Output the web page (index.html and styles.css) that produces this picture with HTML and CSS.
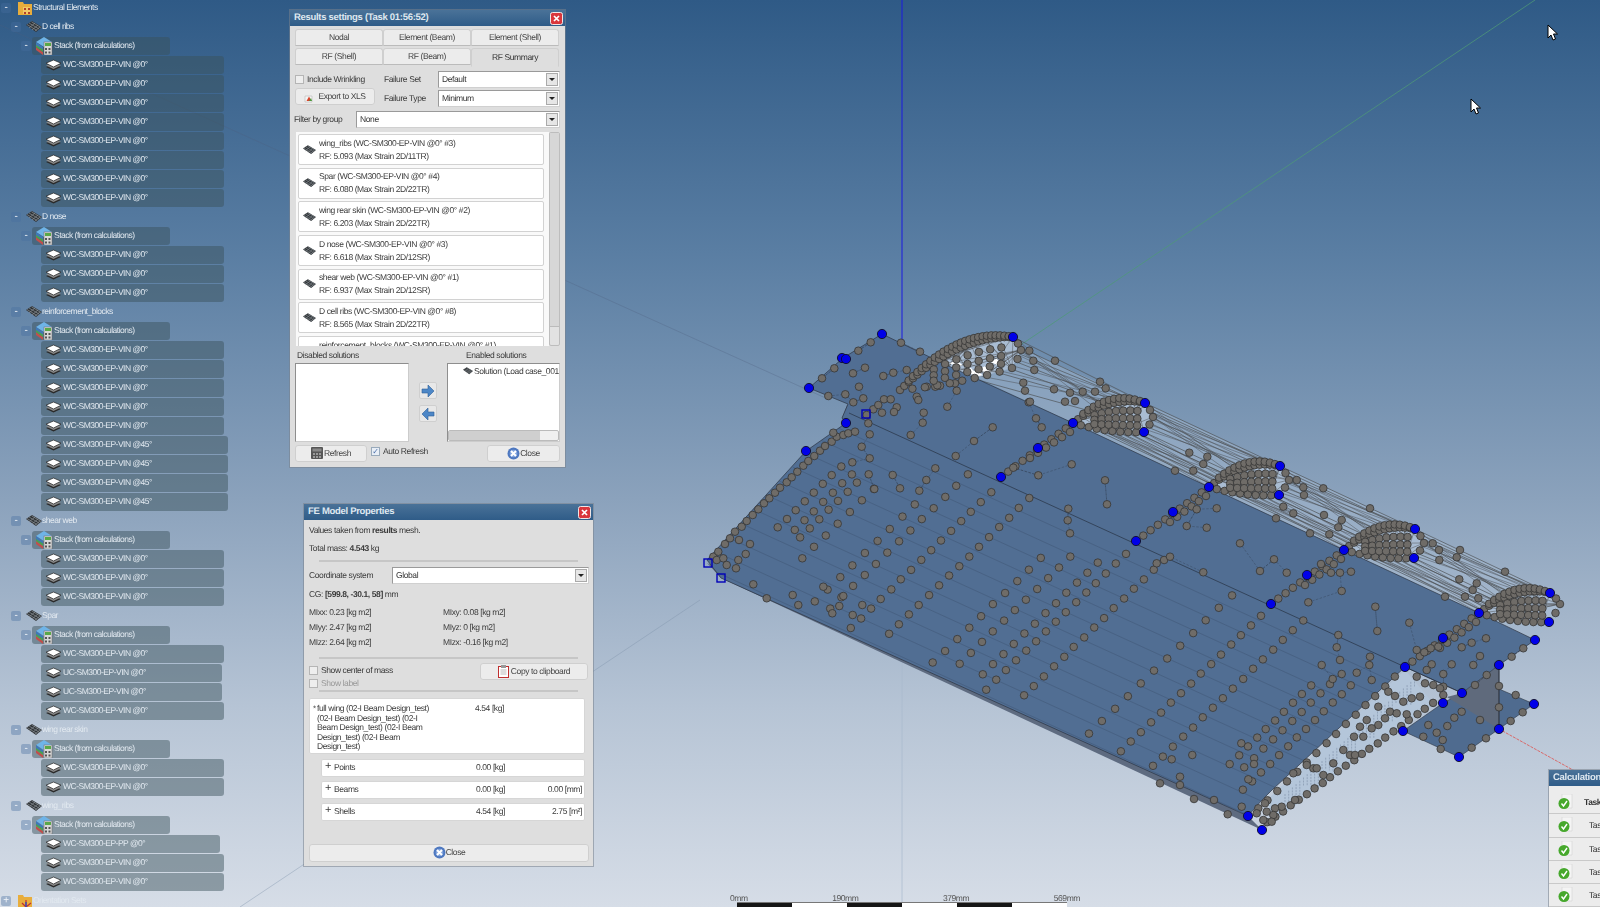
FILE: index.html
```html
<!DOCTYPE html>
<html lang="en">
<head>
<meta charset="utf-8">
<title>FE Results</title>
<link rel="stylesheet" href="styles.css">
<script src="mesh.js" defer></script>
</head>
<body>
<svg class="defs" width="0" height="0" aria-hidden="true">
  <symbol id="ply" viewBox="0 0 17 12">
    <path d="M8.5 5 16 8 8.5 11.5 1 8z" fill="#2a2a2a"/>
    <path d="M8.5 3.500 16 6.500 8.500 10 1 6.500z" fill="#888"/>
    <path d="M8.500 1 16 4.200 8.500 8 1 4.200z" fill="#fff" stroke="#222" stroke-width=".7"/>
  </symbol>
  <symbol id="stk" viewBox="0 0 18 18">
    <path d="M1 10 8 15 8 18 1 13z" fill="#c0504d"/>
    <path d="M1 7 8 12 8 15 1 10z" fill="#4aa050"/>
    <path d="M1 5 9 0 17 5 9 10z" fill="#6fb4e8"/>
    <path d="M1 5 8 10 8 12.500 1 8z" fill="#3e78b8"/>
    <rect x="9" y="5" width="8" height="13" fill="#d8d8d8" stroke="#666" stroke-width=".5"/>
    <rect x="10" y="6" width="6" height="3" fill="#5aa848"/>
    <path d="M10 11h2v2h-2zM13.500 11h2v2h-2zM10 14.500h2v2h-2zM13.500 14.500h2v2h-2z" fill="#555"/>
  </symbol>
  <symbol id="msh" viewBox="0 0 16 12">
    <path d="M0 4 6 0 16 6 10 11z" fill="#2f3336"/>
    <path d="M3 2 13 8M5.500 .8 15 6.500M1 3.500 11 9.500M3 7 9 2M6 9 12 4M9 10 14 6" stroke="#8b9196" stroke-width=".7" fill="none"/>
  </symbol>
  <symbol id="fld" viewBox="0 0 14 14">
    <path d="M0 1h5l1 2h8v11H0z" fill="#e8ad3c"/>
    <path d="M5 6h7v7H5z" fill="#f2c867"/>
    <path d="M6 7h2v2H6zM10 7h2v2h-2zM6 11h2v2H6zM10 11h2v2h-2z" fill="#b3402a"/>
  </symbol>
  <symbol id="fld2" viewBox="0 0 14 14">
    <path d="M0 1h5l1 2h8v11H0z" fill="#e8ad3c"/>
    <path d="M8 13V6M8 13 13 9M8 13 4 9" stroke="#c03030" stroke-width="1.200"/>
    <path d="M8 13V8" stroke="#2f50c0" stroke-width="1.400"/>
  </symbol>
  <symbol id="xbtn" viewBox="0 0 13 13">
    <rect x=".5" y=".5" width="12" height="12" rx="2" fill="#d9363c" stroke="#efe6e6"/>
    <path d="M4 4l5 5M9 4 4 9" stroke="#fff" stroke-width="1.700"/>
  </symbol>
  <symbol id="cls" viewBox="0 0 13 13">
    <circle cx="6.500" cy="6.500" r="6" fill="#4e78c0"/>
    <circle cx="6.500" cy="6.500" r="3.800" fill="#7fa2dc"/>
    <path d="M4 4l5 5M9 4 4 9" stroke="#fff" stroke-width="2"/>
  </symbol>
  <symbol id="chk" viewBox="0 0 16 16">
    <path d="M4 0h10v14H4z" fill="#f4f4f4" stroke="#ccc" stroke-width=".5"/>
    <circle cx="6" cy="9.500" r="5.500" fill="#46a82c"/>
    <path d="M3.500 9.500 5.500 12 9 7" stroke="#fff" stroke-width="1.400" fill="none"/>
  </symbol>
</svg>

<svg id="mesh" class="mesh" width="1600" height="907" viewBox="0 0 1600 907"></svg>

<nav class="tree">
  <div class="row root"><i class="exp">-</i><svg class="ic-f"><use href="#fld"/></svg><span>Structural Elements</span></div>

  <div class="row grp"><i class="exp">-</i><svg class="ic-m"><use href="#msh"/></svg><span>D cell ribs</span></div>
  <div class="row stk"><i class="exp">-</i><span class="pill"><svg class="ic-s"><use href="#stk"/></svg>Stack (from calculations)</span></div>
  <div class="row ply"><span class="pill vin"><svg class="ic-p"><use href="#ply"/></svg>WC-SM300-EP-VIN @0°</span></div>
  <div class="row ply"><span class="pill vin"><svg class="ic-p"><use href="#ply"/></svg>WC-SM300-EP-VIN @0°</span></div>
  <div class="row ply"><span class="pill vin"><svg class="ic-p"><use href="#ply"/></svg>WC-SM300-EP-VIN @0°</span></div>
  <div class="row ply"><span class="pill vin"><svg class="ic-p"><use href="#ply"/></svg>WC-SM300-EP-VIN @0°</span></div>
  <div class="row ply"><span class="pill vin"><svg class="ic-p"><use href="#ply"/></svg>WC-SM300-EP-VIN @0°</span></div>
  <div class="row ply"><span class="pill vin"><svg class="ic-p"><use href="#ply"/></svg>WC-SM300-EP-VIN @0°</span></div>
  <div class="row ply"><span class="pill vin"><svg class="ic-p"><use href="#ply"/></svg>WC-SM300-EP-VIN @0°</span></div>
  <div class="row ply"><span class="pill vin"><svg class="ic-p"><use href="#ply"/></svg>WC-SM300-EP-VIN @0°</span></div>

  <div class="row grp"><i class="exp">-</i><svg class="ic-m"><use href="#msh"/></svg><span>D nose</span></div>
  <div class="row stk"><i class="exp">-</i><span class="pill"><svg class="ic-s"><use href="#stk"/></svg>Stack (from calculations)</span></div>
  <div class="row ply"><span class="pill vin"><svg class="ic-p"><use href="#ply"/></svg>WC-SM300-EP-VIN @0°</span></div>
  <div class="row ply"><span class="pill vin"><svg class="ic-p"><use href="#ply"/></svg>WC-SM300-EP-VIN @0°</span></div>
  <div class="row ply"><span class="pill vin"><svg class="ic-p"><use href="#ply"/></svg>WC-SM300-EP-VIN @0°</span></div>

  <div class="row grp"><i class="exp">-</i><svg class="ic-m"><use href="#msh"/></svg><span>reinforcement_blocks</span></div>
  <div class="row stk"><i class="exp">-</i><span class="pill"><svg class="ic-s"><use href="#stk"/></svg>Stack (from calculations)</span></div>
  <div class="row ply"><span class="pill vin"><svg class="ic-p"><use href="#ply"/></svg>WC-SM300-EP-VIN @0°</span></div>
  <div class="row ply"><span class="pill vin"><svg class="ic-p"><use href="#ply"/></svg>WC-SM300-EP-VIN @0°</span></div>
  <div class="row ply"><span class="pill vin"><svg class="ic-p"><use href="#ply"/></svg>WC-SM300-EP-VIN @0°</span></div>
  <div class="row ply"><span class="pill vin"><svg class="ic-p"><use href="#ply"/></svg>WC-SM300-EP-VIN @0°</span></div>
  <div class="row ply"><span class="pill vin"><svg class="ic-p"><use href="#ply"/></svg>WC-SM300-EP-VIN @0°</span></div>
  <div class="row ply"><span class="pill v45"><svg class="ic-p"><use href="#ply"/></svg>WC-SM300-EP-VIN @45°</span></div>
  <div class="row ply"><span class="pill v45"><svg class="ic-p"><use href="#ply"/></svg>WC-SM300-EP-VIN @45°</span></div>
  <div class="row ply"><span class="pill v45"><svg class="ic-p"><use href="#ply"/></svg>WC-SM300-EP-VIN @45°</span></div>
  <div class="row ply"><span class="pill v45"><svg class="ic-p"><use href="#ply"/></svg>WC-SM300-EP-VIN @45°</span></div>

  <div class="row grp"><i class="exp">-</i><svg class="ic-m"><use href="#msh"/></svg><span>shear web</span></div>
  <div class="row stk"><i class="exp">-</i><span class="pill"><svg class="ic-s"><use href="#stk"/></svg>Stack (from calculations)</span></div>
  <div class="row ply"><span class="pill vin"><svg class="ic-p"><use href="#ply"/></svg>WC-SM300-EP-VIN @0°</span></div>
  <div class="row ply"><span class="pill vin"><svg class="ic-p"><use href="#ply"/></svg>WC-SM300-EP-VIN @0°</span></div>
  <div class="row ply"><span class="pill vin"><svg class="ic-p"><use href="#ply"/></svg>WC-SM300-EP-VIN @0°</span></div>

  <div class="row grp"><i class="exp">-</i><svg class="ic-m"><use href="#msh"/></svg><span>Spar</span></div>
  <div class="row stk"><i class="exp">-</i><span class="pill"><svg class="ic-s"><use href="#stk"/></svg>Stack (from calculations)</span></div>
  <div class="row ply"><span class="pill vin"><svg class="ic-p"><use href="#ply"/></svg>WC-SM300-EP-VIN @0°</span></div>
  <div class="row ply"><span class="pill uc"><svg class="ic-p"><use href="#ply"/></svg>UC-SM300-EP-VIN @0°</span></div>
  <div class="row ply"><span class="pill uc"><svg class="ic-p"><use href="#ply"/></svg>UC-SM300-EP-VIN @0°</span></div>
  <div class="row ply"><span class="pill vin"><svg class="ic-p"><use href="#ply"/></svg>WC-SM300-EP-VIN @0°</span></div>

  <div class="row grp"><i class="exp">-</i><svg class="ic-m"><use href="#msh"/></svg><span>wing rear skin</span></div>
  <div class="row stk"><i class="exp">-</i><span class="pill"><svg class="ic-s"><use href="#stk"/></svg>Stack (from calculations)</span></div>
  <div class="row ply"><span class="pill vin"><svg class="ic-p"><use href="#ply"/></svg>WC-SM300-EP-VIN @0°</span></div>
  <div class="row ply"><span class="pill vin"><svg class="ic-p"><use href="#ply"/></svg>WC-SM300-EP-VIN @0°</span></div>

  <div class="row grp"><i class="exp">-</i><svg class="ic-m"><use href="#msh"/></svg><span>wing_ribs</span></div>
  <div class="row stk"><i class="exp">-</i><span class="pill"><svg class="ic-s"><use href="#stk"/></svg>Stack (from calculations)</span></div>
  <div class="row ply"><span class="pill pp"><svg class="ic-p"><use href="#ply"/></svg>WC-SM300-EP-PP @0°</span></div>
  <div class="row ply"><span class="pill vin"><svg class="ic-p"><use href="#ply"/></svg>WC-SM300-EP-VIN @0°</span></div>
  <div class="row ply"><span class="pill vin"><svg class="ic-p"><use href="#ply"/></svg>WC-SM300-EP-VIN @0°</span></div>

  <div class="row root"><i class="exp">+</i><svg class="ic-f"><use href="#fld2"/></svg><span>Orientation Sets</span></div>
</nav>

<section class="win win-res">
  <header class="title"><b>Results settings (Task 01:56:52)</b><svg class="x"><use href="#xbtn"/></svg></header>
  <div class="tabs">
    <span class="tab">Nodal</span><span class="tab">Element (Beam)</span><span class="tab">Element (Shell)</span>
    <span class="tab">RF (Shell)</span><span class="tab">RF (Beam)</span><span class="tab on">RF Summary</span>
  </div>
  <div class="opts">
    <label class="chk-l"><i class="cb"></i>Include Wrinkling</label>
    <span class="lbl">Failure Set</span>
    <span class="combo">Default<i class="drop"></i></span>
    <span class="btn b-xls"><svg class="ic-x" viewBox="0 0 12 12"><path d="M1 5h7v6H1z" fill="#f4f4f4" stroke="#bbb" stroke-width=".6"/><path d="M2.500 10 5 5.500 7.500 10z" fill="#d8442c"/><path d="M5 10 7 7l1 3z" fill="#4a9a3c"/></svg>Export to XLS</span>
    <span class="lbl">Failure Type</span>
    <span class="combo">Minimum<i class="drop"></i></span>
  </div>
  <div class="filter"><span>Filter by group</span><span class="combo">None<i class="drop"></i></span></div>
  <div class="sum">
    <div class="sum-list">
      <div class="item"><svg class="ic-m2"><use href="#msh"/></svg><p>wing_ribs (WC-SM300-EP-VIN @0° #3)<br>RF: 5.093 (Max Strain 2D/11TR)</p></div>
      <div class="item"><svg class="ic-m2"><use href="#msh"/></svg><p>Spar (WC-SM300-EP-VIN @0° #4)<br>RF: 6.080 (Max Strain 2D/22TR)</p></div>
      <div class="item"><svg class="ic-m2"><use href="#msh"/></svg><p>wing rear skin (WC-SM300-EP-VIN @0° #2)<br>RF: 6.203 (Max Strain 2D/22TR)</p></div>
      <div class="item"><svg class="ic-m2"><use href="#msh"/></svg><p>D nose (WC-SM300-EP-VIN @0° #3)<br>RF: 6.618 (Max Strain 2D/12SR)</p></div>
      <div class="item"><svg class="ic-m2"><use href="#msh"/></svg><p>shear web (WC-SM300-EP-VIN @0° #1)<br>RF: 6.937 (Max Strain 2D/12SR)</p></div>
      <div class="item"><svg class="ic-m2"><use href="#msh"/></svg><p>D cell ribs (WC-SM300-EP-VIN @0° #8)<br>RF: 8.565 (Max Strain 2D/22TR)</p></div>
      <div class="item"><svg class="ic-m2"><use href="#msh"/></svg><p>reinforcement_blocks (WC-SM300-EP-VIN @0° #1)<br>RF: 9.120 (Max Strain 2D/22TR)</p></div>
    </div>
    <div class="vbar"><i></i></div>
  </div>
  <div class="sols">
    <div class="sol-col c1"><span class="sol-t">Disabled solutions</span><div class="sol-box"></div></div>
    <div class="arrows">
      <span class="abtn"><svg viewBox="0 0 14 14"><path d="M1 5h6V1l6 6-6 6V9H1z" fill="#4d87c7" stroke="#2d5f98" stroke-width=".6"/></svg></span>
      <span class="abtn"><svg viewBox="0 0 14 14"><path d="M13 5H7V1L1 7l6 6V9h6z" fill="#4d87c7" stroke="#2d5f98" stroke-width=".6"/></svg></span>
    </div>
    <div class="sol-col c2"><span class="sol-t">Enabled solutions</span>
      <div class="sol-box en"><div class="sol-row"><svg class="ic-m3"><use href="#msh"/></svg><span>Solution (Load case_001)</span></div><div class="hbar"><i></i></div></div>
    </div>
  </div>
  <div class="foot">
    <span class="btn b-ref"><svg class="ic-c" viewBox="0 0 12 12"><rect width="12" height="12" rx="1" fill="#555"/><rect x="1.500" y="1.500" width="9" height="3" fill="#888"/><path d="M2 6h2v2H2zM5 6h2v2H5zM8 6h2v2H8zM2 9h2v2H2zM5 9h2v2H5zM8 9h2v2H8z" fill="#999"/></svg>Refresh</span>
    <label class="chk-l auto"><i class="cb on">✓</i>Auto Refresh</label>
    <span class="btn b-cls"><svg class="ic-b"><use href="#cls"/></svg>Close</span>
  </div>
</section>

<section class="win win-fe">
  <header class="title"><b>FE Model Properties</b><svg class="x"><use href="#xbtn"/></svg></header>
  <div class="fe">
    <p class="t1">Values taken from <b>results</b> mesh.</p>
    <p class="t2">Total mass: <b>4.543</b> kg</p>
    <hr class="rule r1">
    <div class="coord"><span>Coordinate system</span><span class="combo">Global<i class="drop"></i></span></div>
    <p class="t3">CG: <b>[599.8, -30.1, 58]</b> mm</p>
    <div class="mi">
      <span>MIxx: 0.23 [kg m2]</span><span>MIxy: 0.08 [kg m2]</span>
      <span>MIyy: 2.47 [kg m2]</span><span>MIyz: 0 [kg m2]</span>
      <span>MIzz: 2.64 [kg m2]</span><span>MIzx: -0.16 [kg m2]</span>
    </div>
    <hr class="rule r2">
    <div class="shows">
      <div class="show-c">
        <label class="chk-l"><i class="cb"></i>Show center of mass</label>
        <label class="chk-l dim"><i class="cb"></i>Show label</label>
      </div>
      <span class="btn b-copy"><svg class="ic-cb" viewBox="0 0 11 13"><rect x=".5" y="1.500" width="10" height="11" fill="#fff" stroke="#c03030"/><rect x="3" y="0" width="5" height="3" fill="#999"/><path d="M2.500 5h6M2.500 7h6M2.500 9h6" stroke="#bbb"/></svg>Copy to clipboard</span>
    </div>
    <hr class="rule r3">
    <div class="mass-head">
      <i class="bul">*</i>
      <p class="mh-name">full wing (02-I Beam Design_test)<br>(02-I Beam Design_test) (02-I<br>Beam Design_test) (02-I Beam<br>Design_test) (02-I Beam<br>Design_test)</p>
      <span class="mh-val">4.54 [kg]</span>
    </div>
    <div class="mass"><i class="plus">+</i><span class="mn">Points</span><span class="mv">0.00 [kg]</span><span class="mx"></span></div>
    <div class="mass"><i class="plus">+</i><span class="mn">Beams</span><span class="mv">0.00 [kg]</span><span class="mx">0.00 [mm]</span></div>
    <div class="mass"><i class="plus">+</i><span class="mn">Shells</span><span class="mv">4.54 [kg]</span><span class="mx">2.75 [m²]</span></div>
    <span class="btn b-fe"><svg class="ic-b"><use href="#cls"/></svg>Close</span>
  </div>
</section>

<section class="win win-calc">
  <header class="title"><b>Calculation Progress</b></header>
  <div class="calc first"><svg class="ic-k"><use href="#chk"/></svg><b>Task 01:56:52</b></div>
  <div class="calc"><svg class="ic-k"><use href="#chk"/></svg><span>Task 1</span></div>
  <div class="calc"><svg class="ic-k"><use href="#chk"/></svg><span>Task 2</span></div>
  <div class="calc"><svg class="ic-k"><use href="#chk"/></svg><span>Task 3</span></div>
  <div class="calc"><svg class="ic-k"><use href="#chk"/></svg><span>Task 4</span></div>
</section>

<div class="scale">
  <div class="scale-labels"><span>0mm</span><span>190mm</span><span>379mm</span><span>569mm</span></div>
  <div class="scale-bar"><i></i><i></i><i></i><i></i><i></i><i></i></div>
</div>

<svg class="cursor c-a" viewBox="0 0 12 18"><path d="M1 1v13l3-3 2 5 2.500-1-2-5h4z" fill="#fff" stroke="#000"/></svg>
<svg class="cursor c-b" viewBox="0 0 12 18"><path d="M1 1v13l3-3 2 5 2.500-1-2-5h4z" fill="#fff" stroke="#000"/></svg>
</body>
</html>
```

FILE: styles.css
```css
* { box-sizing: border-box; }
html, body { margin: 0; padding: 0; height: 100%; overflow: hidden; }
body {
  position: relative;
  width: 1600px;
  height: 907px;
  background: linear-gradient(180deg, #2f5a86 0%, #5a7ea3 28%, #8ba2bc 55%, #b6c4d5 78%, #d6dde7 100%);
  font: 8.500px/1.2 "Liberation Sans", Arial, sans-serif;
  letter-spacing: -.4px;
  text-rendering: geometricPrecision;
  color: #3a3a3a;
}
.defs { position: absolute; }
.mesh { position: absolute; left: 0; top: 0; filter: blur(.35px); }

/* Tree */
.tree { position: relative; width: 240px; margin-top: -2px; color: #e2e9f0; letter-spacing: -.5px; filter: blur(.3px); }
.row { height: 19px; display: flex; align-items: center; white-space: nowrap; }
.exp {
  width: 10px; height: 10px; flex: none; border-radius: 2px;
  background: rgba(70, 110, 160, .38);
  font: 10px/9px "Liberation Sans", sans-serif; text-align: center; color: #f3f6fa;
}
.root { padding-left: 1px; }
.root .exp { margin-right: 7px; }
.ic-f { width: 14px; height: 14px; margin-right: 1px; }
.grp { padding-left: 11px; }
.grp .exp { margin-right: 5px; }
.ic-m { width: 16px; height: 12px; margin-right: 0; }
.stk { padding-left: 21px; }
.stk .exp { margin-right: 1px; }
.pill {
  height: 18px; display: flex; align-items: center; border-radius: 3px;
  background: rgba(58, 80, 90, .47);
}
.stk .pill { width: 138px; padding-left: 3px; }
.ic-s { width: 18px; height: 18px; margin-right: 1px; }
.ply { padding-left: 41px; }
.ply .pill { padding-left: 4px; }
.vin { width: 183px; }
.v45 { width: 187px; }
.uc { width: 181px; }
.pp { width: 179px; }
.ic-p { width: 17px; height: 12px; margin-right: 1px; }

/* Windows */
.win { position: absolute; background: #dedede; box-shadow: 0 0 0 1px rgba(120,130,140,.55); filter: blur(.3px); }
.win-res { left: 290px; top: 10px; width: 275px; height: 457px; }
.win-fe { left: 304px; top: 504px; width: 289px; height: 362px; }
.win-calc { left: 1549px; top: 770px; width: 60px; height: 137px; background: #ececec; overflow: hidden; }
.title {
  height: 16px; display: flex; align-items: center; justify-content: space-between;
  padding: 0 2px 0 4px;
  background: linear-gradient(180deg, #4a7298, #2f5c88);
  color: #dfe8f0; font-size: 9.500px; letter-spacing: -.3px; white-space: nowrap;
}
.x { width: 13px; height: 13px; }

/* Tabs */
.tabs { display: grid; grid-template-columns: 88px 88px 88px; gap: 2px 0; margin: 3px 0 0 5px; }
.tab {
  height: 17px; display: flex; align-items: center; justify-content: center;
  background: #ececec; border: 1px solid #cfcfcf; border-bottom-color: #bbb; border-radius: 3px 3px 0 0;
  color: #444;
}
.tab.on { background: #dedede; border-bottom-color: #dedede; color: #333; height: 19px; margin-bottom: -2px; }

.opts {
  display: grid; grid-template-columns: 89px 54px 122px; grid-auto-rows: 17px;
  gap: 2px 0; margin: 6px 0 0 5px; align-items: center;
}
.chk-l { display: flex; align-items: center; white-space: nowrap; }
.cb {
  width: 9px; height: 9px; margin-right: 3px; flex: none; background: #eee; border: 1px solid #b5b5b5;
  font: 8px/7px "Liberation Sans", sans-serif; color: #4a6ea8; text-align: center;
}
.combo {
  display: flex; align-items: center; justify-content: space-between; height: 17px; padding: 0 1px 0 3px;
  background: #fff; border: 1px solid #9a9a9a; border-right-color: #d0d0d0; border-bottom-color: #d0d0d0;
  color: #333;
}
.drop {
  width: 12px; height: 13px; background: #e6e6e6; border: 1px solid #aaa; position: relative; flex: none;
}
.drop::after {
  content: ""; position: absolute; left: 2px; top: 4px; width: 0; height: 0;
  border: 3px solid transparent; border-top: 3px solid #222;
}
.btn {
  display: flex; align-items: center; justify-content: center; background: #ececec;
  border: 1px solid #cfcfcf; border-radius: 3px; color: #444; white-space: nowrap;
}
.b-xls { width: 80px; height: 17px; align-self: start; margin-top: -2px; }
.ic-x { width: 12px; height: 12px; margin-right: 2px; }
.filter { display: grid; grid-template-columns: 62px 204px; margin: 4px 0 0 4px; align-items: center; }
.sum { display: flex; margin: 4px 0 0 6px; height: 214px; }
.sum-list { width: 253px; height: 214px; overflow: hidden; background: #f9f9f9; padding: 2px 5px 0 2px; }
.item {
  height: 31px; margin-bottom: 2.700px; display: flex; align-items: center; padding-left: 4px;
  background: #fff; border: 1px solid #d2d2d2; border-radius: 2px;
}
.ic-m2 { width: 13px; height: 10px; margin-right: 3px; flex: none; }
.item p { margin: 0; line-height: 13px; color: #3a3a3a; white-space: nowrap; }
.vbar { width: 11px; background: #e2e2e2; border: 1px solid #bdbdbd; border-radius: 2px; padding: 0; }
.vbar i { display: block; height: 194px; background: #d7d7d7; border-bottom: 1px solid #bbb; }

.sols { position: relative; display: flex; margin: 4px 0 0 5px; height: 93px; }
.sol-col { display: flex; flex-direction: column; }
.c1 { width: 114px; }
.c2 { width: 113px; }
.sol-t { height: 13px; line-height: 11px; }
.c1 .sol-t { padding-left: 2px; }
.c2 .sol-t { padding-left: 19px; }
.sol-box { height: 79px; background: #fff; border: 1px solid #8e8e8e; border-right-color: #ccc; border-bottom-color: #ccc; }
.en { display: flex; flex-direction: column; justify-content: space-between; overflow: hidden; }
.sol-row { display: flex; align-items: center; padding: 2px 0 0 15px; white-space: nowrap; }
.ic-m3 { width: 10px; height: 8px; margin-right: 1px; flex: none; }
.hbar { height: 11px; background: #f0f0f0; border: 1px solid #bbb; border-radius: 2px; }
.hbar i { display: block; width: 91px; height: 9px; background: #cfcfcf; }
.arrows { width: 38px; display: flex; flex-direction: column; align-items: center; padding-top: 32px; }
.abtn { width: 18px; height: 17px; margin-bottom: 6px; display: flex; align-items: center; justify-content: center; background: #e8e8e8; border: 1px solid #cfcfcf; border-radius: 2px; }
.abtn svg { width: 14px; height: 14px; }

.foot { display: flex; align-items: center; margin: 1px 0 0 5px; height: 18px; }
.b-ref { width: 72px; height: 17px; }
.ic-c { width: 12px; height: 12px; margin-right: 1px; }
.auto { margin-left: 4px; margin-top: -4px; width: 116px; }
.cb.on { background: #e8eef6; border-color: #9ab; }
.b-cls { width: 73px; height: 17px; }
.ic-b { width: 13px; height: 13px; margin-right: 0; }

/* FE */
.fe { display: flex; flex-direction: column; padding: 0 5px; }
.fe p { margin: 0; }
.t1 { margin-top: 5px !important; line-height: 11px; padding-left: 0; }
.t2 { margin-top: 7px !important; line-height: 11px; }
.rule { border: 0; height: 2px; background: #c6c6c6; margin: 0 10px; }
.r1 { margin-top: 6px; }
.coord { display: grid; grid-template-columns: 83px 197px; align-items: center; margin-top: 5px; }
.t3 { margin-top: 4px !important; line-height: 12px; }
.mi { display: grid; grid-template-columns: 134px 1fr; grid-auto-rows: 15px; margin-top: 5px; align-items: center; }
.r2 { margin-top: 7px; }
.shows { display: flex; justify-content: space-between; height: 26px; margin-top: 4px; }
.show-c { display: flex; flex-direction: column; gap: 4px; padding-top: 3px; }
.show-c .chk-l { height: 9px; }
.dim { color: #999; }
.b-copy { width: 108px; height: 17px; margin: 0 0 0 auto; }
.ic-cb { width: 11px; height: 13px; margin-right: 2px; }
.r3 { margin-top: 1px; }
.mass-head {
  display: flex; height: 56px; margin-top: 6px; padding: 5px 0 0 3px; width: 276px;
  background: #fff; border: 1px solid #d6d6d6; border-radius: 2px; line-height: 9.500px;
}
.bul { width: 4px; font-size: 8px; font-style: normal; flex: none; }
.mh-name { width: 122px; margin: 0; white-space: nowrap; }
.mh-val { margin-left: 36px; }
.mass {
  display: grid; grid-template-columns: 7px 144px 60px 1fr; align-items: center;
  height: 18px; width: 264px; margin: 4px 0 0 12px; padding: 0 2px 0 3px;
  background: #fff; border: 1px solid #d6d6d6; border-radius: 2px;
}
.mass-head + .mass { margin-top: 4.500px; }
.plus { font: 11px/8px "Liberation Sans", sans-serif; margin-top: -4px; }
.mn { padding-left: 2px; }
.mx { text-align: right; }
.b-fe { width: 280px; height: 18px; margin-top: 23px; }

/* Calc */
.calc { display: flex; align-items: center; height: 23.300px; padding: 0 0 0 9px; border-bottom: 1px solid #c9c9c9; color: #333; white-space: nowrap; }
.ic-k { width: 16px; height: 16px; margin-right: 10px; flex: none; }
.calc span { margin-left: 5px; }
.first { margin-top: 5px; }

/* Scale */
.scale { position: absolute; left: 730px; top: 893px; width: 350px; filter: blur(.25px); }
.scale-labels { display: flex; justify-content: space-between; height: 9px; line-height: 10px; color: #555; }
.scale-bar { display: flex; margin-left: 7px; width: 330px; height: 6px; border-top: 1px solid #777; }
.scale-bar i { flex: 1; background: #fff; }
.scale-bar i:nth-child(odd) { background: #161616; }

.cursor { position: absolute; width: 12px; height: 18px; }
.c-a { left: 1547px; top: 24px; }
.c-b { left: 1470px; top: 98px; }
```

FILE: mesh.js
```javascript
(function () {
  var out = [];
  var seed = 12345;
  function rnd() { seed = (seed * 16807) % 2147483647; return seed / 2147483647; }
  function Z6(l) { return l.map(function (p) { return [700 + p[0] / 3, 320 + p[1] / 3]; }); }
  function Z7(l) { return l.map(function (p) { return [1150 + p[0] / 3, 450 + p[1] / 3]; }); }
  function poly(pts, fill, extra) { out.push('<polygon points="' + pts + '" fill="' + fill + '" ' + (extra || '') + '/>'); }
  function line(a, b, col, w, extra) {
    out.push('<line x1="' + a[0].toFixed(1) + '" y1="' + a[1].toFixed(1) + '" x2="' + b[0].toFixed(1) + '" y2="' + b[1].toFixed(1) + '" stroke="' + col + '" stroke-width="' + w + '" ' + (extra || '') + '/>');
  }
  var nodes = [];
  function add(l) { l.forEach(function (p) { nodes.push(p); }); }
  function chain(a, b, sp, ox, oy) {
    var len = Math.hypot(b[0] - a[0], b[1] - a[1]), n = Math.round(len / sp), i;
    for (i = 0; i <= n; i++) {
      nodes.push([a[0] + (b[0] - a[0]) * i / n + (ox || 0), a[1] + (b[1] - a[1]) * i / n + (oy || 0)]);
    }
  }

  var SKIN = '707,560 806,451 846,423 842,418 848,404 809,388 843,358 882,334 940,362 1073,423 1209,487 1344,550 1479,613 1535,640 1499,665 1462,693 1405,667 1272,790 1262,800 1248,816 721,578';

  out.push('<defs><clipPath id="skinClip"><polygon points="' + SKIN + '"/></clipPath></defs>');

  // Axes and faint construction lines
  line([902, 0], [902, 395], '#1a1ae0', 1);
  line([902, 395], [902, 907], '#a9bace', 1, 'opacity=".7"');
  line([1013, 350], [1535, 0], '#4f9a78', 1, 'opacity=".75"');
  line([1499, 729], [1600, 785], '#d86a6a', 1, 'stroke-dasharray="3 1"');
  line([0, 25], [830, 400], '#4f5f7e', 1, 'opacity=".3"');
  line([700, 600], [240, 907], '#7e92aa', 1, 'opacity=".4"');

  // Rear box fill behind the wire
  poly('940,360 1013,345 1145,403 1280,466 1415,529 1550,593 1549,622 1535,640 1479,613 1344,550 1209,487 1073,423', '#a3b7ce', 'opacity=".45"');

  // Ribs
  var ribs = [
    { b: [900, 390], t: [1013, 337], n: [1021, 350], m: [1012, 368], h: 14, white: 1 },
    { b: [1073, 423], t: [1145, 403], n: [1153, 417], m: [1144, 432], h: 9 },
    { b: [1209, 487], t: [1280, 466], n: [1289, 480], m: [1279, 495], h: 9 },
    { b: [1344, 550], t: [1415, 529], n: [1424, 543], m: [1414, 558], h: 9 },
    { b: [1479, 613], t: [1550, 593], n: [1560, 604], m: [1549, 622], h: 9 }
  ];
  function arc(r, u, bulge) {
    return [
      r.b[0] + (r.t[0] - r.b[0]) * u,
      r.b[1] + (r.t[1] - r.b[1]) * u - 4 * u * (1 - u) * bulge
    ];
  }
  function lower(r, u, drop) {
    return [
      r.b[0] + (r.m[0] - r.b[0]) * u,
      r.b[1] + (r.m[1] - r.b[1]) * u + 4 * u * (1 - u) * drop
    ];
  }
  function section(r) {
    var s = [];
    for (var i = 0; i <= 8; i++) s.push(arc(r, i / 8, r.h));
    s.push(r.n);
    for (var j = 8; j >= 2; j--) s.push(lower(r, j / 8, 3));
    return s;
  }
  // Wire between ribs
  for (var w = 0; w < ribs.length - 1; w++) {
    var s1 = section(ribs[w]), s2 = section(ribs[w + 1]);
    for (var k = 2; k < s1.length; k++) {
      if (w === 0 && k > 9) continue;
      line(s1[k], s2[(k + (k % 3 === 0 ? 1 : 0)) % s2.length], '#4f5358', .7);
      line(s1[k], s2[(k + 3) % s2.length], '#4f5358', .5);
    }
  }
  // Rib webs
  ribs.forEach(function (r) {
    var s = section(r);
    poly(s.map(function (p) { return p[0].toFixed(1) + ',' + p[1].toFixed(1); }).join(' '), '#a9bcd2');
    var i;
    for (i = 0; i < 45; i++) {
      var a = s[Math.floor(rnd() * s.length)], b = s[Math.floor(rnd() * s.length)];
      line(a, b, '#454545', .45);
    }
  });
  // white gaps of the first rib
  Z6([[770,130],[812,152],[855,148],[890,125],[830,160]]).forEach(function (p, i) {
    poly((p[0] - 7) + ',' + p[1] + ' ' + p[0] + ',' + (p[1] - 3) + ' ' + (p[0] + 6) + ',' + (p[1] + 2 + i % 2) + ' ' + p[0] + ',' + (p[1] + 3), '#ffffff');
  });

  // Darker underside and flat tab, web
  poly('707,563 721,578 1262,830 1248,816', '#5e6b80');
  poly('1534,704 1499,729 1459,757 1403,731 1443,703 1462,693 1499,689', '#4f6b8f', 'stroke="#2b3442" stroke-width=".6"');
  poly('1499,665 1499,729 1447,697 1462,693', '#5f6a7c');
  line([1499, 665], [1499, 729], '#2e3540', 1.2);
  poly('847,405 865,413 846,424 842,418', '#5f6b80');

  // Spar face
  poly('1405,670 1433,703 1273,822 1267,800', '#b4c6da');
  for (var v = 0; v < 36; v++) {
    var vx = 1285 + v * 3.7, vy = 790 - v * 3.300;
    line([vx, vy + 4], [vx, vy + 12 + (v % 5) * 4], '#70839a', .5, 'stroke-dasharray="2 1"');
  }

  // Skin
  poly(SKIN, '#516e93', 'stroke="#2b3442" stroke-width=".7"');

  // Span lines
  var g = '<g clip-path="url(#skinClip)">';
  var d;
  for (d = 14; d < 180; d += 14) {
    g += '<line x1="' + (849 - d) + '" y1="' + (413 + .97 * d) + '" x2="' + (1405 - d) + '" y2="' + (667 + .97 * d) + '" stroke="#2c3a50" stroke-width=".5" opacity=".45"/>';
  }
  g += '</g>';
  out.push(g);
  line([849, 413], [1462, 693], '#202836', .6);

  // Chord rows
  function yS(x) { return 413 + .457 * (x - 849); }
  function depth(x) { return (578 + .452 * (x - 721) - yS(x)) / 1.422; }
  var rows = [
    [881, 40, 108, 9], [894, 42, 107, 9.5], [903, 46, 104, 9.5], [919, 45, 125, 12], [958, 43, 172, 12.5],
    [973, 5, 182, 11.5], [1001, 10, 160, 10], [1031, 2, 170, 10],
    [1081, 40, 175, 12], [1100, 30, 175, 11], [1123, 25, 175, 10.5], [1136, 10, 160, 10], [1166, 2, 160, 10],
    [1237, 5, 165, 13], [1271, 10, 150, 10], [1303, 0, 150, 10],
    [1354, 43, 125, 9], [1366, 36, 130, 9.5], [1381, 30, 145, 9], [1405, 10, 139, 9.8]
  ];
  rows.forEach(function (r) {
    var max = Math.min(r[2], depth(r[0]) - 5);
    for (var t = r[1]; t <= max; t += r[3]) {
      nodes.push([r[0] - t + (rnd() - .5) * .6, yS(r[0]) + .97 * t + (rnd() - .5) * .6]);
    }
  });
  // Chains from each rib base down to the spar
  chain([1073, 423], [1001, 477], 9); chain([1070, 432], [1030, 458], 9);
  chain([1209, 487], [1136, 541], 9); chain([1206, 496], [1170, 522], 9);
  chain([1344, 550], [1271, 604], 9); chain([1341, 559], [1305, 585], 9);
  chain([1479, 613], [1405, 667], 9); chain([1476, 622], [1440, 648], 9);

  // Leading edge
  add(Z6([[40,710],[55,695],[75,672],[90,655],[105,635],[125,620],[140,603],[158,585],[175,568],[192,550],[208,535],[225,518],[240,503],[260,487],[275,472],[292,455],[310,437],[325,423],[343,408],[360,392],[375,378],[395,365],[410,350],[430,345],[445,340],[465,335],[400,338],[50,720],[70,715],[80,735],[115,720],[137,702],[150,672],[117,660],[500,285],[520,268],[535,255],[552,238],[572,238],[590,262],[546,278],[582,276],[505,310]]));
  // Flap and rear zone
  var rear = Z6([[512,67],[603,68],[660,95],[475,92],[495,143],[403,145],[459,160],[366,175],[580,158],[550,168],[477,200],[436,223],[490,235],[385,228],[460,247],[620,150],[742,260],[878,322],[822,363],[767,408],[706,445],[632,345],[668,308],[671,278],[650,230],[770,212],[765,190],[720,197],[680,200],[706,200],[655,240],[1008,295],[986,247],[1025,322],[1115,433],[1215,481],[1221,553],[1105,566],[1103,601],[1110,640],[1015,466],[940,443],[509,343],[485,380],[509,415],[457,427],[506,463],[578,465],[523,507],[600,505],[679,480],[658,512]])
    .concat(Z7([[270,280],[372,328],[330,363],[160,367],[410,368],[60,320],[20,340],[170,233],[140,178],[200,175],[110,228],[575,423],[475,457],[676,470],[682,543],[778,518],[565,555],[560,592],[570,630],[603,365],[570,368],[543,368],[513,342],[1008,565],[965,578],[935,592],[990,618],[905,643],[970,645],[845,643],[880,672],[830,660],[800,600],[823,607],[842,595],[865,590],[1120,595],[1085,620],[1010,675],[975,705],[880,710],[660,620],[658,645],[665,690],[620,668],[575,672],[548,687],[515,645]]));
  rear.forEach(function (p) {
    var best = rear.map(function (q, j) { return [Math.hypot(p[0] - q[0], p[1] - q[1]), j]; }).sort(function (a, b) { return a[0] - b[0]; });
    line(p, rear[best[1][1]], '#2c3646', .5, 'stroke-dasharray="2.500 1.500" opacity=".65"');
  });
  add(rear);
  // Tab and bottom edge
  add(Z7([[1097,735],[1118,787],[1082,813],[1008,865],[965,893],[872,897],[878,870],[820,860],[860,848],[892,828],[913,803],[835,825],[935,785],[990,810],[1047,772],[1047,708],[30,1000],[90,1005],[132,1047],[192,1050],[233,1093],[275,1070],[90,980],[295,988],[65,928],[127,915],[274,880],[312,942]]));
  add(Z6([[160,793],[200,835],[295,855],[418,858],[487,855],[430,828],[370,800],[278,825],[458,885],[397,880],[108,745]]));
  // Spar face nodes
  for (var q = 0; q <= 21; q++) { nodes.push([1433 - q * 7.9 + (rnd() - .5), 703 + q * 5.7 + (rnd() - .5)]); }
  add(Z7([[715,725],[735,738],[760,755],[785,745],[810,740],[720,785],[740,790],[770,793],[705,805],[685,825],[665,835],[640,860],[630,830],[650,810],[685,770],[612,860],[580,900],[600,915],[615,915],[550,940],[520,975],[490,955],[470,945],[500,955],[430,970],[435,1050],[395,1070],[375,1075],[370,1095],[350,1085],[345,1060],[365,1115],[340,1110],[325,1075],[320,1090],[800,680],[825,700],[850,705],[870,715],[880,735]]));
  // Wire mid-nodes
  add(Z7([[520,115],[522,195],[660,175],[575,210],[565,232],[538,253],[480,250],[460,112],[462,135],[440,90],[430,190],[378,205],[400,170],[930,300],[920,322],[867,300],[868,330],[848,280],[928,388],[885,440],[945,440],[1065,365],[980,400],[968,420],[985,445],[75,62],[130,62],[160,42],[172,20],[118,8]]));
  add(Z6([[1065,122],[1000,122],[1003,150],[970,188],[975,212],[990,245],[1062,208],[1200,185],[1110,218],[1148,215],[1185,215],[1217,205],[1095,245],[1125,243],[988,92]]));

  // Rib nodes: stacked chains between the upper arc and the lower skin of the rib
  ribs.forEach(function (r) {
    var i, n = r.white ? 26 : 14;
    for (i = 0; i <= n; i++) {
      var u = i / n;
      nodes.push(arc(r, u, r.h));
      if (i > 1) nodes.push(arc(r, u, r.h + (r.white ? 5 : 4)));
    }
    var lw = 9;
    for (i = 1; i <= lw; i++) { nodes.push(lower(r, i / lw, 3)); }
    nodes.push(r.n);
    nodes.push([(r.t[0] + r.n[0]) / 2 + 1, (r.t[1] + r.n[1]) / 2]);
    nodes.push([(r.m[0] + r.n[0]) / 2 + 1, (r.m[1] + r.n[1]) / 2]);
    [.3, .55, .78].forEach(function (f) {
      for (i = 3; i <= 9; i++) {
        var u3 = i / 10, top3 = arc(r, u3, r.h), bot3 = lower(r, u3, 3);
        nodes.push([top3[0] + (bot3[0] - top3[0]) * f, top3[1] + (bot3[1] - top3[1]) * f]);
      }
    });
  });

  nodes.forEach(function (p) {
    out.push('<circle cx="' + p[0].toFixed(1) + '" cy="' + p[1].toFixed(1) + '" r="3.800" fill="#6f6c68" stroke="#353535" stroke-width=".8"/>');
  });

  // Blue constraint points
  var blue = [[882,334],[842,358],[846,359],[809,388],[846,423],[806,451],[1073,423],[1145,403],[1144,432],[1038,448],[1001,477],[1136,541],[1173,512],[1209,487],[1280,466],[1279,495],[1307,575],[1271,604],[1344,550],[1415,529],[1414,558],[1479,613],[1550,593],[1549,622],[1443,638],[1405,667],[1535,640],[1499,665],[1462,693],[1443,703],[1403,731],[1534,704],[1499,729],[1459,757],[1248,816],[1262,830],[1013,337]];
  blue.forEach(function (p) {
    out.push('<circle cx="' + p[0] + '" cy="' + p[1] + '" r="4.600" fill="#0000e8" stroke="#10102a" stroke-width=".9"/>');
  });
  [[708,563],[721,578],[866,414]].forEach(function (p) {
    out.push('<rect x="' + (p[0] - 4) + '" y="' + (p[1] - 4) + '" width="8" height="8" fill="none" stroke="#0000b8" stroke-width="1.400"/>');
  });

  document.getElementById('mesh').innerHTML = out.join('');
})();
```
